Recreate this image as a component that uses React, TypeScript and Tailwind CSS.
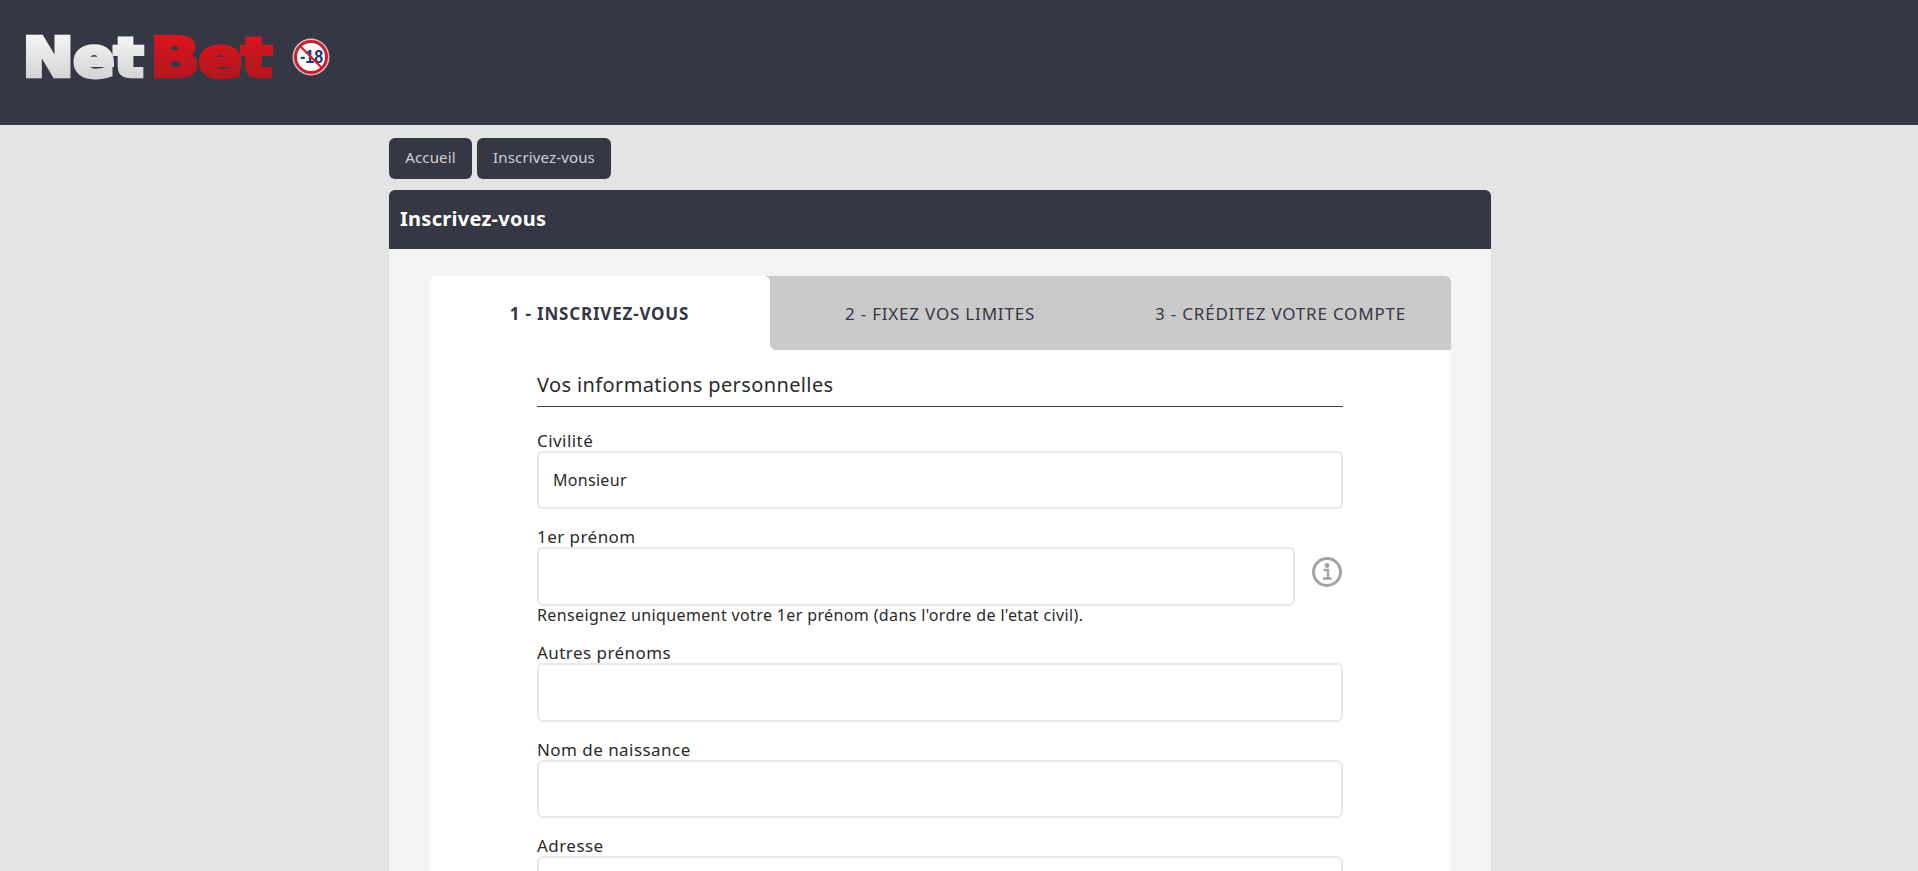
import React from "react";

const font = { fontFamily: '"Noto Sans", "Open Sans", sans-serif' };

function Logo() {
  const common = {
    y: 51,
    fontFamily: "'DejaVu Sans', sans-serif",
    fontWeight: 700,
    fontSize: 53,
    strokeWidth: 4.5,
    strokeLinejoin: "miter" as const,
    lengthAdjust: "spacingAndGlyphs" as const,
  };
  return (
    <svg width="292" height="70" viewBox="0 0 292 70" className="block shrink-0" role="img" aria-label="NetBet">
      <defs>
        <linearGradient id="w" x1="0" y1="0" x2="0" y2="1">
          <stop offset="0" stopColor="#fbfbfb" />
          <stop offset="1" stopColor="#cdcdcf" />
        </linearGradient>
        <linearGradient id="r" x1="0" y1="0" x2="0" y2="1">
          <stop offset="0" stopColor="#e2141d" />
          <stop offset="1" stopColor="#aa161e" />
        </linearGradient>
      </defs>
      <text {...common} x="23" textLength="120" fill="url(#w)" stroke="url(#w)">Net</text>
      <text {...common} x="151" textLength="121" fill="url(#r)" stroke="url(#r)">Bet</text>
    </svg>
  );
}

function Badge() {
  return (
    <svg width="38" height="38" viewBox="0 0 38 38" className="mt-[13px] block shrink-0" role="img" aria-label="-18">
      <circle cx="19" cy="19" r="18.500" fill="#e3b9bf" />
      <circle cx="19" cy="19" r="15.500" fill="#fff" stroke="#c9202c" strokeWidth="3" />
      <text x="19.500" y="25" textAnchor="middle" fontFamily="'Liberation Sans', sans-serif" fontWeight="700" fontSize="18" fill="#27347a" textLength="23" lengthAdjust="spacingAndGlyphs">-18</text>
      <line x1="8" y1="8" x2="30" y2="30" stroke="#c9202c" strokeWidth="2.200" />
    </svg>
  );
}

function Field({ label, value, hint, info }: { label: string; value?: string; hint?: string; info?: boolean }) {
  return (
    <div className="mb-[18px]">
      <label className="block h-[20px] text-[17px] leading-[19px] tracking-[0.45px] text-[#2b2b2b]">{label}</label>
      <div className="flex items-center">
        <div className="flex h-[58.5px] flex-1 items-center rounded-[6px] border-2 border-[#e9e9e9] bg-white px-[14px] text-[16px] tracking-[0.3px] text-[#2b2b2b]">
          {value}
        </div>
        {info && (
          <svg width="32" height="32" viewBox="0 0 32 32" className="-mt-[9px] ml-[16px] block shrink-0" fill="none">
            <circle cx="16" cy="16" r="13.500" stroke="#a3a3a3" strokeWidth="3" />
            <circle cx="16" cy="9.500" r="2.400" fill="#a3a3a3" />
            <path d="M12.500 14h4.500v8M12 22.500h8.500" stroke="#a3a3a3" strokeWidth="2.400" />
          </svg>
        )}
      </div>
      {hint && <p className="h-[19.5px] text-[16px] leading-[19px] tracking-[0.37px] text-[#2b2b2b]">{hint}</p>}
    </div>
  );
}

export default function App() {
  return (
    <div style={font} className="h-[871px] overflow-hidden bg-[#e4e4e4]">
      <header className="flex h-[125px] items-start bg-[#363744] pt-[25px]">
        <Logo />
        <Badge />
      </header>
      <main className="ml-[389px] w-[1102px]">
        <nav className="flex gap-[5px] pt-[13px]">
          <a className="flex h-[41px] w-[83px] items-center justify-center rounded-[6px] bg-[#363744] pb-[2px] text-[15px] tracking-[0.15px] text-[#cfd0d4]">Accueil</a>
          <a className="flex h-[41px] w-[134px] items-center justify-center rounded-[6px] bg-[#363744] pb-[2px] text-[15px] tracking-[0.15px] text-[#cfd0d4]">Inscrivez-vous</a>
        </nav>
        <section className="mt-[11px]">
          <h1 className="flex h-[59px] items-center rounded-t-[6px] bg-[#363744] pb-[2px] pl-[11px] text-[20px] font-bold tracking-[0.28px] text-white">Inscrivez-vous</h1>
          <div className="bg-[#f4f4f4] px-[40px] pt-[27px]">
            <div className="flex h-[74px] rounded-t-[6px] bg-[#cacaca] text-[17px] tracking-[0.8px] text-[#363744]">
              <div className="flex w-[341px] items-center justify-center rounded-t-[6px] bg-white pt-[1px] font-bold">1 - INSCRIVEZ-VOUS</div>
              <div className="relative flex w-[340px] items-center justify-center pt-[1px]">
                <span className="absolute bottom-0 left-0 size-[6px] bg-[radial-gradient(circle_at_top_right,#cacaca_5.5px,#ffffff_6.5px)]" />
                2 - FIXEZ VOS LIMITES
              </div>
              <div className="flex w-[341px] items-center justify-center pt-[1px]">3 - CRÉDITEZ VOTRE COMPTE</div>
            </div>
            <div className="rounded-t-[4px] bg-white px-[108px] pt-[19px]">
              <h2 className="h-[38px] border-b border-[#444] text-[20px] leading-[31px] tracking-[0.38px] text-[#2b2b2b]">Vos informations personnelles</h2>
              <div className="pt-[23.5px]">
                <Field label="Civilité" value="Monsieur" />
                <Field label="1er prénom" info hint="Renseignez uniquement votre 1er prénom (dans l'ordre de l'etat civil)." />
                <Field label="Autres prénoms" />
                <Field label="Nom de naissance" />
                <Field label="Adresse" />
              </div>
            </div>
          </div>
        </section>
      </main>
    </div>
  );
}
